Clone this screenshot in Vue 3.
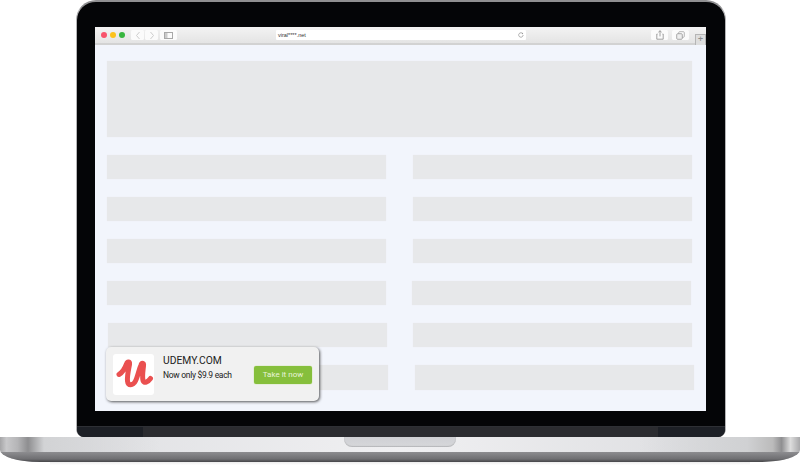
<script setup>
const rows = [
  { id: 1, left: 0, right: 0, h: 24 },
  { id: 2, left: 0, right: 0, h: 24 },
  { id: 3, left: 0, right: 0, h: 24 },
  { id: 4, left: 0, right: -1, h: 24 },
  { id: 5, left: 1, right: -1, h: 24 },
  { id: 6, left: 2, right: 0, h: 25 }
]
</script>

<template>
  <div class="page">
    <div class="lid">
      <div class="screen">
        <div class="toolbar">
          <div class="lights">
            <span class="light red"></span>
            <span class="light yellow"></span>
            <span class="light green"></span>
          </div>
          <div class="btn-pair">
            <span class="tbtn nav">
              <svg width="6" height="9" viewBox="0 0 6 9"><path d="M4.5 1 1.5 4.5 4.5 8" fill="none" stroke="#cdcdcd" stroke-width="1"/></svg>
            </span>
            <span class="tbtn nav">
              <svg width="6" height="9" viewBox="0 0 6 9"><path d="M1.5 1 4.5 4.5 1.5 8" fill="none" stroke="#cdcdcd" stroke-width="1"/></svg>
            </span>
          </div>
          <span class="tbtn side">
            <svg width="9" height="7" viewBox="0 0 9 7"><rect x=".5" y=".5" width="8" height="6" fill="none" stroke="#a8a8a8"/><rect x="1" y="1" width="2.5" height="5" fill="#cbcbcb"/></svg>
          </span>
          <div class="address">
            <span class="url">viral****.net</span>
            <svg class="reload" width="6" height="6" viewBox="0 0 7 7"><path d="M5.6 2.1A2.6 2.6 0 1 0 6 3.5" fill="none" stroke="#8c8c8c" stroke-width=".8"/><path d="M4.4 1 6 1.2 5.6 2.8z" fill="#8c8c8c"/></svg>
          </div>
          <span class="tbtn act">
            <svg width="8" height="10" viewBox="0 0 8 10"><path d="M1.5 4H.8v5.2h6.4V4H6.5M4 6.4V.8M2.4 2.2 4 .7l1.6 1.5" fill="none" stroke="#8a8a8a" stroke-width=".8"/></svg>
          </span>
          <span class="tbtn act">
            <svg width="9" height="9" viewBox="0 0 9 9"><rect x="2.7" y=".7" width="5.6" height="5.6" rx="1" fill="none" stroke="#a5a5a5" stroke-width=".8"/><rect x=".7" y="2.7" width="5.6" height="5.6" rx="1" fill="#eee" stroke="#959595" stroke-width=".8"/></svg>
          </span>
          <span class="newtab">+</span>
        </div>

        <div class="content">
          <div class="hero"></div>
          <div
            v-for="row in rows"
            :key="row.id"
            class="row"
          >
            <div class="bar" :style="{ marginLeft: row.left + 'px', height: row.h + 'px' }"></div>
            <div class="bar" :style="{ marginLeft: row.right + 'px', height: row.h + 'px' }"></div>
          </div>
        </div>

        <div class="notice">
          <div class="logo">
            <svg width="41" height="41" viewBox="0 0 41 41">
              <path d="M6 20.5 C9.5 18.5 12 14 13.5 10 C14.5 7 17 7.5 16.5 10.5 C15.5 16 14 22 14.5 27 C15 32 20 32 22.5 27 C25 22 26 15 28 11 C29 8.5 31 9 30.5 12 C30 17 29 22 30 26.5 C31 30 35 28 37.5 24.5"
                fill="none" stroke="#ea5050" stroke-width="5" stroke-linecap="round" stroke-linejoin="round"/>
            </svg>
          </div>
          <div class="copy">
            <div class="brand">UDEMY.COM</div>
            <div class="offer">Now only $9.9 each</div>
          </div>
          <button class="cta">Take it now</button>
        </div>
      </div>
      <div class="hinge"></div>
    </div>

    <div class="base">
      <div class="notch"></div>
    </div>
    <div class="foot"></div>
  </div>
</template>

<style>
html, body { margin: 0; background: #fff; }
</style>

<style scoped>
.page {
  width: 800px;
  height: 473px;
  overflow: hidden;
  display: flex;
  flex-direction: column;
  align-items: flex-start;
  background: #fff;
  font-family: "Roboto", "Liberation Sans", sans-serif;
}
.lid {
  width: 650px;
  height: 437px;
  flex: none;
  box-sizing: border-box;
  margin-left: 76px;
  padding: 25px 18px 0;
  background: #040507;
  border-radius: 20px 20px 8px 8px;
  border: 1px solid #b4b4b6;
  border-top: 2px solid #8f8f91;
  border-bottom: 0;
  display: flex;
  flex-direction: column;
}
.screen {
  width: 611px;
  height: 384px;
  flex: none;
  position: relative;
  background: #f2f5fc;
  display: flex;
  flex-direction: column;
}
.hinge {
  flex: none;
  margin: 15px -18px 0;
  height: 10px;
  background: linear-gradient(90deg, #1d2026 0 66px, #2b2c30 66px 581px, #1d2026 581px);
  border-top: 1px solid #2e3035;
  border-radius: 0 0 7px 7px;
}
.toolbar {
  flex: none;
  height: 18px;
  box-sizing: border-box;
  background: linear-gradient(#f3f3f3, #e4e4e4);
  border-bottom: 2px solid #d2d2d2;
  display: flex;
  align-items: center;
  padding-left: 6px;
  position: relative;
}
.lights { display: flex; gap: 3px; margin-right: 6px; }
.light { width: 6px; height: 6px; border-radius: 50%; }
.red { background: #f8536b; }
.yellow { background: #fcc21c; }
.green { background: #37b63f; }
.btn-pair { display: flex; gap: 1px; margin-right: 2px; }
.tbtn {
  height: 10px;
  background: #fbfbfb;
  border-radius: 1.5px;
  display: flex;
  align-items: center;
  justify-content: center;
}
.nav { width: 13px; }
.side { width: 17px; }
.address {
  width: 250px;
  height: 10px;
  margin-left: 99px;
  margin-right: 125px;
  background: #fff;
  border-radius: 1px;
  display: flex;
  align-items: center;
  justify-content: space-between;
  padding: 0 2px;
  box-sizing: border-box;
}
.url { font-size: 5.5px; color: #333; line-height: 10px; font-family: "Liberation Sans", sans-serif; }
.act { width: 17px; margin-right: 4px; }
.newtab {
  position: absolute;
  right: 0;
  top: 7px;
  width: 11px;
  height: 11px;
  box-sizing: border-box;
  border: 1px solid #b5b5b5;
  border-bottom: 0;
  background: #dedede;
  color: #8c8c8c;
  font-size: 9px;
  line-height: 9px;
  text-align: center;
}
.content {
  flex: 1;
  padding: 16px 14px 0 12px;
  display: flex;
  flex-direction: column;
  gap: 18px;
}
.hero { height: 76px; background: #e7e8ea; box-shadow: 0 0 1px #eceef1; }
.row { display: flex; gap: 27px; }
.bar { width: 279px; flex: none; background: #e7e8ea; box-shadow: 0 0 1px #eceef1; }
.notice {
  position: absolute;
  left: 11px;
  top: 320px;
  width: 213px;
  height: 54px;
  box-sizing: border-box;
  padding: 7px;
  display: flex;
  align-items: flex-start;
  background: #f1f1f1;
  border-radius: 5px;
  box-shadow: 1px 1px 3px rgba(0, 0, 0, .65);
}
.logo {
  width: 41px;
  height: 41px;
  flex: none;
  border-radius: 3px;
  background: #fff;
  margin-right: 9px;
}
.logo svg { display: block; }
.copy { flex: 1; min-width: 0; }
.brand { font-size: 10.3px; line-height: 13px; color: #222; margin-bottom: 2px; }
.offer { font-size: 8.5px; line-height: 12px; color: #222; letter-spacing: -.3px; white-space: nowrap; }
.cta {
  flex: none;
  width: 58px;
  height: 18px;
  margin-top: 12px;
  padding: 0;
  border: 0;
  border-radius: 2px;
  background: #86bf3c;
  box-shadow: 0 0 0 .5px #dcebc6;
  color: #e9f4da;
  font: 8px/18px "Roboto", sans-serif;
}
.base {
  flex: none;
  width: 800px;
  height: 25px;
  position: relative;
  display: flex;
  justify-content: center;
  background:
    linear-gradient(90deg, #a5a5a7 0, #c8c8ca .8%, #b5b5b7 2.2%, #8e8e90 3.5%, #d2d3d5 5.5%, rgba(218,219,221,0) 20%, rgba(218,219,221,0) 80%, #d0d1d3 93.4%, #bbb 96.6%, #8f8f91 97.7%, #ddd 98.8%, #a8a8aa 100%),
    linear-gradient(90deg, #dcdde0, #f0f0f2 50%, #d8d9dc);
  border-radius: 0 0 40px 40px / 0 0 12px 12px;
  overflow: hidden;
}
.base::after {
  content: "";
  position: absolute;
  left: 0;
  right: 0;
  bottom: 0;
  height: 10px;
  background: linear-gradient(#8d8d90, #6f6f72 70%, #454548);
}
.notch {
  width: 112px;
  height: 10px;
  background: linear-gradient(#cfd0d4, #d6d7da);
  border-radius: 0 0 8px 8px;
  box-shadow: inset 0 -1px 1px rgba(0,0,0,.15);
}
.foot {
  flex: none;
  width: 700px;
  height: 3px;
  margin-left: 50px;
  background: linear-gradient(#ececec, #fff);
}
</style>
